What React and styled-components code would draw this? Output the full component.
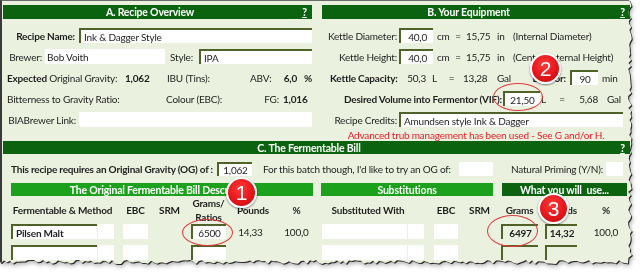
import React from 'react';
import styled, { createGlobalStyle } from 'styled-components';

const DARK = '#0b630f';
const BRIGHT = '#1ba11b';
const PAPER = '#ebf1df';
const OLIVE = '#4f6228';
const INK = '#1e1e1e';

function makeTorn(w, h) {
  let seed = 11;
  const rnd = () => {
    seed = (seed * 9301 + 49297) % 233280;
    return seed / 233280;
  };
  const pts = ['0px 0px', `${w - 5}px 0px`];
  for (let y = 3; y <= h - 8; y += 3) {
    pts.push(`${(w - 6 + rnd() * 4).toFixed(1)}px ${y}px`);
  }
  for (let x = w - 6; x >= 0; x -= 3) {
    pts.push(`${x}px ${(h - 8 + rnd() * 4).toFixed(1)}px`);
  }
  pts.push(`0px ${h - 6}px`);
  return `polygon(${pts.join(', ')})`;
}

const TORN = makeTorn(634, 268);

const GlobalStyle = createGlobalStyle`
  html, body { margin: 0; padding: 0; background: #fff; }
  body {
    font-family: Lato, "Liberation Sans", sans-serif;
    font-size: 10px;
    letter-spacing: -0.2px;
    color: ${INK};
  }
  * { box-sizing: border-box; }
`;

const Frame = styled.div`
  position: relative;
  width: 640px;
  height: 277px;
`;

const Shadow = styled.div`
  width: 638px;
  height: 272px;
  filter: drop-shadow(1px 1px 0.5px rgba(0, 0, 0, 0.8)) drop-shadow(1px 2px 2px rgba(0, 0, 0, 0.3));
`;

const Sheet = styled.div`
  width: 634px;
  height: 268px;
  background: ${PAPER};
  border-top: 1px solid #6b6b6b;
  border-left: 2px solid #3a3a3a;
  clip-path: ${TORN};
  padding: 4px 0 0 1px;
  display: flex;
  flex-direction: column;
`;

const Top = styled.div`
  display: flex;
  gap: 10px;
`;

const Section = styled.section`
  width: ${p => p.$w}px;
  display: flex;
  flex-direction: column;
`;

const Bar = styled.div`
  flex: none;
  width: ${p => (p.$w ? `${p.$w}px` : 'auto')};
  margin-left: ${p => p.$ml || 0}px;
  height: ${p => p.$h || 14}px;
  background: ${p => (p.$tone === 'bright' ? BRIGHT : DARK)};
  color: #fff;
  font-weight: 700;
  font-size: 10.5px;
  display: flex;
  align-items: center;
  white-space: nowrap;
`;

const BarTitle = styled.div`
  flex: 1;
  text-align: center;
`;

const Help = styled.span`
  width: 15px;
  text-align: center;
  text-decoration: underline;
`;

const Rows = styled.div`
  display: flex;
  flex-direction: column;
  padding-top: 6px;
`;

const Row = styled.div`
  height: ${p => p.$h || 21}px;
  margin-top: ${p => p.$mt || 0}px;
  display: flex;
  align-items: center;
`;

const Cell = styled.div`
  flex: none;
  width: ${p => (p.$w ? `${p.$w}px` : 'auto')};
  margin-left: ${p => p.$ml || 0}px;
  padding-left: ${p => p.$pl || 0}px;
  padding-right: ${p => p.$pr || 0}px;
  text-align: ${p => p.$align || 'left'};
  font-weight: ${p => (p.$bold ? 700 : 400)};
  line-height: ${p => p.$lh || 'normal'};
  white-space: nowrap;
`;

const Field = styled.div`
  flex: none;
  width: ${p => p.$w}px;
  height: ${p => p.$h || 15}px;
  margin-left: ${p => p.$ml || 0}px;
  background: ${p => (p.$clear ? 'transparent' : '#fff')};
  border-top: ${p => (p.$framed ? `2px solid ${OLIVE}` : 'none')};
  border-left: ${p => (p.$framed ? `2px solid ${OLIVE}` : 'none')};
  display: flex;
  align-items: center;
  justify-content: ${p => ({ center: 'center', right: 'flex-end' }[p.$align] || 'flex-start')};
  padding: 0 ${p => p.$pad || 0}px;
  font-weight: ${p => (p.$bold ? 700 : 400)};
  white-space: nowrap;
  overflow: hidden;
`;

const Note = styled.div`
  height: 11px;
  line-height: 11px;
  text-align: center;
  color: #e4212b;
`;

const Callout = styled.div`
  position: absolute;
  left: ${p => p.$x}px;
  top: ${p => p.$y}px;
  width: ${p => p.$w}px;
  height: ${p => p.$h}px;
  border: 1.6px solid #dc3d3d;
  border-radius: 50%;
  pointer-events: none;
`;

const Badge = styled.div`
  position: absolute;
  left: ${p => p.$x}px;
  top: ${p => p.$y}px;
  width: 31px;
  height: 31px;
  border-radius: 50%;
  border: 2px solid #fff;
  background: radial-gradient(circle at 45% 35%, #ff3b3b 0%, #e5161b 55%, #b80d10 100%);
  box-shadow: 0 1px 2px rgba(0, 0, 0, 0.5);
  color: #fff;
  font-family: "Liberation Sans", Arial, sans-serif;
  font-size: 21px;
  letter-spacing: 0;
  line-height: 27px;
  text-align: center;
`;

const Header = ({ title, w, h }) => (
  <Bar $w={w} $h={h}>
    <BarTitle>{title}</BarTitle>
    <Help>?</Help>
  </Bar>
);

export default function App() {
  return (
    <>
      <GlobalStyle />
      <Frame>
        <Shadow>
          <Sheet>
            <Top>
              <Section $w={309}>
                <Header title="A. Recipe Overview" />
                <Rows>
                  <Row>
                    <Cell $w={76} $align="right" $pr={4} $bold>Recipe Name:</Cell>
                    <Field $w={233} $framed $pad={3}>Ink &amp; Dagger Style</Field>
                  </Row>
                  <Row>
                    <Cell $w={42} $align="right" $pr={3}>Brewer:</Cell>
                    <Field $w={120} $pad={2}>Bob Voith</Field>
                    <Cell $w={34} $align="right" $pr={6}>Style:</Cell>
                    <Field $w={113} $framed $pad={3}>IPA</Field>
                  </Row>
                  <Row>
                    <Cell $w={119} $pl={4}><b>Expected</b> Original Gravity:</Cell>
                    <Cell $w={40} $pl={3} $bold>1,062</Cell>
                    <Cell $w={88} $pl={5}>IBU (Tins):</Cell>
                    <Cell $w={24} $align="right" $pr={3}>ABV:</Cell>
                    <Cell $w={26} $align="right" $pr={3} $bold>6,0</Cell>
                    <Cell $w={12} $align="right" $bold>%</Cell>
                  </Row>
                  <Row>
                    <Cell $w={159} $pl={4}>Bitterness to Gravity Ratio:</Cell>
                    <Cell $w={88} $pl={4}>Colour (EBC):</Cell>
                    <Cell $w={31} $align="right" $pr={2}>FG:</Cell>
                    <Cell $w={31} $pl={2} $bold>1,016</Cell>
                  </Row>
                  <Row>
                    <Cell $w={76} $align="right" $pr={3}>BIABrewer Link:</Cell>
                    <Field $w={233} />
                  </Row>
                </Rows>
              </Section>
              <Section $w={308}>
                <Header title="B. Your Equipment" />
                <Rows>
                  <Row>
                    <Cell $w={77} $align="right" $pr={2}>Kettle Diameter:</Cell>
                    <Field $w={34} $framed $align="right" $pad={6}>40,0</Field>
                    <Cell $w={20} $pl={4}>cm</Cell>
                    <Cell $w={10} $align="center">=</Cell>
                    <Cell $w={29} $pl={3}>15,75</Cell>
                    <Cell $w={18} $pl={5}>in</Cell>
                    <Cell $pl={3}>(Internal Diameter)</Cell>
                  </Row>
                  <Row>
                    <Cell $w={77} $align="right" $pr={2}>Kettle Height:</Cell>
                    <Field $w={34} $framed $align="right" $pad={6}>40,0</Field>
                    <Cell $w={20} $pl={4}>cm</Cell>
                    <Cell $w={10} $align="center">=</Cell>
                    <Cell $w={29} $pl={3}>15,75</Cell>
                    <Cell $w={18} $pl={5}>in</Cell>
                    <Cell $pl={3}>(Central Internal Height)</Cell>
                  </Row>
                  <Row>
                    <Cell $w={77} $pl={8} $bold>Kettle Capacity:</Cell>
                    <Cell $w={31} $align="right" $pr={4}>50,3</Cell>
                    <Cell $w={10} $pl={2}>L</Cell>
                    <Cell $w={23} $align="center">=</Cell>
                    <Cell $w={29}>13,28</Cell>
                    <Cell $w={24} $pl={5}>Gal</Cell>
                    <Cell $w={54} $align="right" $pr={4} $bold>Boil for:</Cell>
                    <Field $w={28} $framed $align="center">90</Field>
                    <Cell $pl={4}>min</Cell>
                  </Row>
                  <Row>
                    <Cell $w={181} $align="right" $pr={1} $bold>Desired Volume into Fermentor (VIF):</Cell>
                    <Field $w={37} $framed $align="center">21,50</Field>
                    <Cell $w={10} $pl={1}>L</Cell>
                    <Cell $w={24} $align="center">=</Cell>
                    <Cell $w={28} $align="right" $pr={4}>5,68</Cell>
                    <Cell $pl={5}>Gal</Cell>
                  </Row>
                  <Row>
                    <Cell $w={77} $align="right" $pr={2}>Recipe Credits:</Cell>
                    <Field $w={224} $framed $pad={3}>Amundsen style Ink &amp; Dagger</Field>
                  </Row>
                </Rows>
                <Note>Advanced trub management has been used - See G and/or H.</Note>
              </Section>
            </Top>

            <Header title="C. The Fermentable Bill" w={627} h={13} />
            <Row $h={15} $mt={7}>
              <Cell $w={214} $align="right" $pr={4} $bold>This recipe requires an Original Gravity (OG) of :</Cell>
              <Field $w={35} $h={14} $framed $align="center">1,062</Field>
              <Cell $w={207} $pl={11}>For this batch though, I&apos;d like to try an OG of:</Cell>
              <Field $w={34} $h={14} />
              <Cell $w={113} $align="right" $pr={3}>Natural Priming (Y/N):</Cell>
              <Field $w={17} $h={14} />
            </Row>
            <Row $h={13} $mt={7}>
              <Bar $w={302} $ml={8} $h={13} $tone="bright"><BarTitle>The Original Fermentable Bill Description</BarTitle></Bar>
              <Bar $w={172} $ml={8} $h={13} $tone="bright"><BarTitle>Substitutions</BarTitle></Bar>
              <Bar $w={125} $ml={9} $h={13}><BarTitle>What you will&nbsp; use...</BarTitle></Bar>
            </Row>
            <Row $h={28}>
              <Cell $w={103} $ml={8} $align="center" $bold>Fermentable &amp; Method</Cell>
              <Cell $w={25} $ml={9} $align="center" $bold>EBC</Cell>
              <Cell $w={43} $align="center" $bold>SRM</Cell>
              <Cell $w={35} $align="center" $bold $lh="14px">Grams/<br />Ratios</Cell>
              <Cell $w={54} $align="center" $bold>Pounds</Cell>
              <Cell $w={33} $align="center" $bold>%</Cell>
              <Cell $w={102} $ml={9} $align="center" $pr={10} $bold>Substituted With</Cell>
              <Cell $w={24} $ml={10} $align="center" $bold>EBC</Cell>
              <Cell $w={43} $align="center" $bold>SRM</Cell>
              <Cell $w={37} $align="center" $bold>Grams</Cell>
              <Cell $w={32} $ml={7} $align="center" $bold>Pounds</Cell>
              <Cell $w={58} $align="center" $bold>%</Cell>
            </Row>
            <Row $h={15}>
              <Field $w={86} $ml={8} $framed $pad={3} $bold>Pilsen Malt</Field>
              <Field $w={16} $ml={1} />
              <Field $w={25} $ml={9} />
              <Cell $w={43} />
              <Field $w={35} $framed $align="center">6500</Field>
              <Cell $w={54} $align="center" $pr={5}>14,33</Cell>
              <Cell $w={33} $align="center">100,0</Cell>
              <Field $w={85} $ml={9} />
              <Field $w={16} $ml={1} />
              <Field $w={24} $ml={10} />
              <Cell $w={43} />
              <Field $w={37} $framed $clear $align="center" $bold>6497</Field>
              <Field $w={32} $ml={7} $framed $clear $align="center" $bold>14,32</Field>
              <Cell $w={58} $align="center">100,0</Cell>
            </Row>
            <Row $h={15} $mt={6}>
              <Field $w={86} $ml={8} $framed />
              <Field $w={16} $ml={1} />
              <Field $w={25} $ml={9} />
              <Cell $w={43} />
              <Field $w={35} $framed />
              <Cell $w={54} />
              <Cell $w={33} />
              <Field $w={85} $ml={9} />
              <Field $w={16} $ml={1} />
              <Field $w={24} $ml={10} />
              <Cell $w={43} />
              <Field $w={37} $framed $clear />
              <Field $w={32} $ml={7} $framed $clear />
            </Row>
          </Sheet>
        </Shadow>
        <Callout $x={493} $y={83} $w={50} $h={28} />
        <Callout $x={182} $y={219} $w={51} $h={27} />
        <Callout $x={487} $y={215} $w={51} $h={32} />
        <Badge $x={226} $y={177}>1</Badge>
        <Badge $x={530} $y={53}>2</Badge>
        <Badge $x={538} $y={193}>3</Badge>
      </Frame>
    </>
  );
}
